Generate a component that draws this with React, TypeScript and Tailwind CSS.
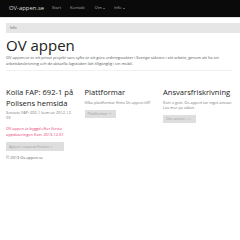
import React from "react";

function Caret() {
    return <span className="ml-[1.5px] inline-block h-0 w-0 border-x-[1.5px] border-t-[1.8px] border-x-transparent border-t-current align-middle" />;
}

export default function App() {
    return (
        <div className="h-[240px] w-[240px] overflow-hidden bg-white font-['Open_Sans',sans-serif] text-[#333]">
            {/* Navbar */}
            <nav className="flex h-[18px] items-center border-b border-[#e2e2e2] bg-[#0a0a0a] pl-[9px] text-[4.05px] text-[#a8a8a8]">
                <span className="mr-[8px] text-[5.9px] leading-none text-[#dcdcdc]">OV-appen.se</span>
                <span className="mr-[9px]">Start</span>
                <span className="mr-[10px]">Kontakt</span>
                <span className="mr-[9px] flex items-center">Om<Caret /></span>
                <span className="flex items-center">Info <Caret /></span>
            </nav>

            <div className="pl-[6px]">
                {/* Breadcrumb */}
                <div className="mt-[5px] flex h-[10px] items-center bg-[#e6e6e6] pl-[4px] text-[3.7px] text-[#555]">
                    Info
                </div>

                {/* Jumbotron */}
                <div className="mr-[8px] border-b border-[#f0f0f0] pb-[4px]">
                    <h1 className="mt-[5px] text-[15px] leading-[15px] text-[#222]">OV appen</h1>
                    <p className="mt-[2px] w-[236px] text-[3.95px] leading-[5.5px] text-[#555]">
                        OV-appen.se är ett privat projekt vars syfte är att göra ordningsvakter i Sverige säkrare i sitt arbete, genom att ha sin arbetsbeskrivning och de aktuella lagstöden lätt tillgänglig i sin mobil.
                    </p>
                </div>

                {/* Columns */}
                <div className="mt-[16px] grid grid-cols-[70px_70px_70px] gap-x-[8.5px]">
                    <div>
                        <h2 className="text-[7.6px] leading-[11px] text-[#222]">Kolla FAP: 692-1 på Polisens hemsida</h2>
                        <p className="mt-[1px] text-[3.9px] leading-[5px] text-[#777]">Senaste FAP: 692-1 kom ut: 2012-12-03</p>
                        <p className="mt-[6px] text-[3.9px] leading-[5.5px] text-[#e8306a]">
                            OV appen är byggd efter första uppdateringen från: 2013-12-01
                        </p>
                        <div className="mt-[5px] flex h-[9px] w-[58px] items-center bg-[#dedede] pl-[3px] text-[3.7px] text-[#a0a0a0]">
                            Appen i separat fönster »
                        </div>
                    </div>
                    <div>
                        <h2 className="text-[7.6px] leading-[11px] text-[#222]">Plattformar</h2>
                        <p className="mt-[2px] text-[3.9px] leading-[5px] text-[#777]">Vilka plattformar finns Ov appen till?</p>
                        <div className="mt-[4.5px] flex h-[8px] w-[31px] items-center bg-[#dedede] pl-[3px] text-[3.7px] text-[#a0a0a0]">
                            Plattformar <Caret />
                        </div>
                    </div>
                    <div>
                        <h2 className="text-[7.6px] leading-[11px] text-[#222]">Ansvarsfriskrivning</h2>
                        <p className="mt-[2px] text-[3.9px] leading-[5px] text-[#777]">
                            Kort o gott. Ov-appen tar inget ansvar. Läs mer på sidan.
                        </p>
                        <div className="mt-[4.5px] flex h-[8px] w-[33px] items-center bg-[#dedede] pl-[3px] text-[3.7px] text-[#a0a0a0]">
                            Om ansvar... »
                        </div>
                    </div>
                </div>

                <p className="mt-[3.5px] text-[3.9px] leading-[5px] text-[#555]">© 2013 Ov-appen.se</p>
            </div>
        </div>
    );
}
